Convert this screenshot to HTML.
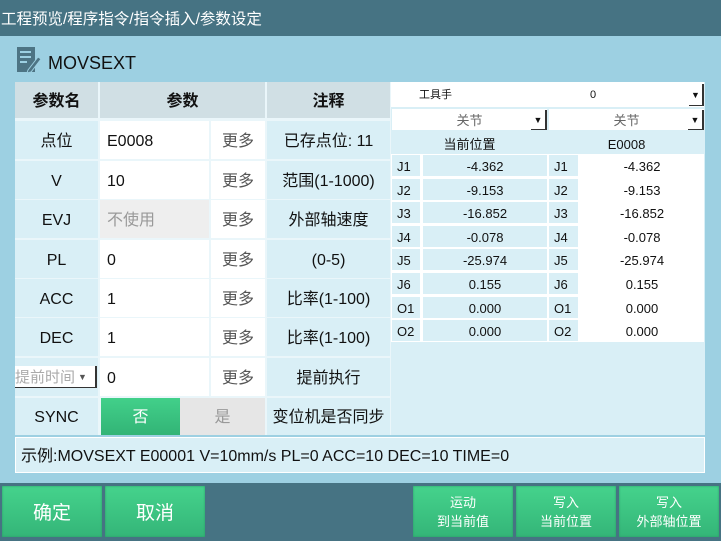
<!DOCTYPE html>
<html><head><meta charset="utf-8"><style>
*{margin:0;padding:0;box-sizing:border-box}
body{width:721px;height:541px;overflow:hidden;background:#9dd0e2;font-family:"Liberation Sans","Noto Sans CJK SC",sans-serif;position:relative;color:#111}
.a{position:absolute;display:flex;align-items:center;justify-content:center;font-size:16px;line-height:1;padding-top:3px}
.h{background:#d0dfe4;font-weight:bold}
.l{background:#d9eff6}
.w{background:#fff}
.g{color:#555}
.L{justify-content:flex-start;padding-left:7px}
.s{font-size:13px;padding-top:2px}
.btn{position:absolute;background:linear-gradient(#45d38c,#34b578);color:#fff;display:flex;align-items:center;justify-content:center;text-align:center;box-shadow:inset 0 0 2px #2a9a66}
</style></head><body>
<div class="a" style="left:0;top:0;width:721px;height:36px;background:#467383;color:#fff;justify-content:flex-start;font-size:15.5px;padding-left:1px">工程预览/程序指令/指令插入/参数设定</div>
<svg style="position:absolute;left:16px;top:46px" width="26" height="28" viewBox="0 0 26 28"><rect x="1" y="1" width="18" height="25" fill="#4d7484"/><rect x="4" y="5" width="11" height="2" fill="#9dd0e2"/><rect x="4" y="10" width="11" height="2" fill="#9dd0e2"/><rect x="4" y="15" width="7" height="2" fill="#9dd0e2"/><path d="M12 24 L22 11 L25 13 L15 26 L11 27 Z" fill="#4d7484" stroke="#9dd0e2" stroke-width="1"/></svg>
<div class="a" style="left:48px;top:47px;height:28px;font-size:18px">MOVSEXT</div>
<div style="position:absolute;left:15px;top:82px;width:376px;height:353px;background:#eaf6fa"></div>
<div class="a h" style="left:15px;top:82px;width:83px;height:36px">参数名</div>
<div class="a h" style="left:100px;top:82px;width:165px;height:36px">参数</div>
<div class="a h" style="left:267px;top:82px;width:123px;height:36px">注释</div>

<div class="a l" style="left:15px;top:121px;width:83px;height:38px">点位</div>
<div class="a w L" style="left:100px;top:121px;width:109px;height:38px">E0008</div>
<div class="a w g" style="left:211px;top:121px;width:54px;height:38px">更多</div>
<div class="a l" style="left:267px;top:121px;width:123px;height:38px">已存点位: 11</div>

<div class="a l" style="left:15px;top:161px;width:83px;height:38px">V</div>
<div class="a w L" style="left:100px;top:161px;width:109px;height:38px">10</div>
<div class="a w g" style="left:211px;top:161px;width:54px;height:38px">更多</div>
<div class="a l" style="left:267px;top:161px;width:123px;height:38px">范围(1-1000)</div>

<div class="a l" style="left:15px;top:200px;width:83px;height:38px">EVJ</div>
<div class="a L" style="left:100px;top:200px;width:109px;height:38px;background:#eee;color:#999">不使用</div>
<div class="a w g" style="left:211px;top:200px;width:54px;height:38px">更多</div>
<div class="a l" style="left:267px;top:200px;width:123px;height:38px">外部轴速度</div>

<div class="a l" style="left:15px;top:240px;width:83px;height:38px">PL</div>
<div class="a w L" style="left:100px;top:240px;width:109px;height:38px">0</div>
<div class="a w g" style="left:211px;top:240px;width:54px;height:38px">更多</div>
<div class="a l" style="left:267px;top:240px;width:123px;height:38px">(0-5)</div>

<div class="a l" style="left:15px;top:279px;width:83px;height:38px">ACC</div>
<div class="a w L" style="left:100px;top:279px;width:109px;height:38px">1</div>
<div class="a w g" style="left:211px;top:279px;width:54px;height:38px">更多</div>
<div class="a l" style="left:267px;top:279px;width:123px;height:38px">比率(1-100)</div>

<div class="a l" style="left:15px;top:318px;width:83px;height:38px">DEC</div>
<div class="a w L" style="left:100px;top:318px;width:109px;height:38px">1</div>
<div class="a w g" style="left:211px;top:318px;width:54px;height:38px">更多</div>
<div class="a l" style="left:267px;top:318px;width:123px;height:38px">比率(1-100)</div>

<div class="a l" style="left:15px;top:358px;width:83px;height:38px"></div>
<div class="a w" style="left:15px;top:366px;width:82px;height:22px;color:#aaa;justify-content:flex-start;font-size:15px;border-right:2px solid #333;border-bottom:1px solid #333;padding-top:1px">提前时间<span style="font-size:9px;color:#555;margin-left:3px">▼</span></div>
<div class="a w L" style="left:100px;top:358px;width:109px;height:38px">0</div>
<div class="a w g" style="left:211px;top:358px;width:54px;height:38px">更多</div>
<div class="a l" style="left:267px;top:358px;width:123px;height:38px">提前执行</div>

<div class="a l" style="left:15px;top:398px;width:83px;height:37px">SYNC</div>
<div class="a" style="left:101px;top:398px;width:79px;height:37px;background:linear-gradient(#42d08a,#32b476);color:#fff">否</div>
<div class="a" style="left:180px;top:398px;width:85px;height:37px;background:#e6e6e6;color:#999">是</div>
<div class="a l" style="left:267px;top:398px;width:123px;height:37px">变位机是否同步</div>

<div class="a l" style="left:15px;top:437px;width:690px;height:36px;justify-content:flex-start;padding-left:5px;border:1px solid #fff">示例:MOVSEXT E00001 V=10mm/s PL=0 ACC=10 DEC=10 TIME=0</div>

<div style="position:absolute;left:391px;top:82px;width:314px;height:353px;background:#d9eff6"></div>
<div class="a w s" style="left:391px;top:82px;width:313px;height:25px;justify-content:flex-start;font-size:11px"><span style="margin-left:28px">工具手</span><span style="margin-left:138px">0</span></div>
<div class="a s" style="left:689px;top:84px;width:15px;height:22px;background:#fff;border-right:2px solid #333;border-bottom:1px solid #333;font-size:9px">▼</div>
<div class="a w s" style="left:392px;top:109px;width:155px;height:21px;color:#666">关节</div>
<div class="a s" style="left:531px;top:110px;width:16px;height:20px;background:#fff;border-right:2px solid #333;border-bottom:1px solid #333;font-size:9px">▼</div>
<div class="a w s" style="left:549px;top:109px;width:155px;height:21px;color:#666">关节</div>
<div class="a s" style="left:688px;top:110px;width:16px;height:20px;background:#fff;border-right:2px solid #333;border-bottom:1px solid #333;font-size:9px">▼</div>
<div class="a l s" style="left:392px;top:132px;width:155px;height:22px">当前位置</div>
<div class="a l s" style="left:549px;top:132px;width:155px;height:22px">E0008</div>
<div style="position:absolute;left:391px;top:154px;width:313px;height:188px;background:#fff"></div>
<div id="rows"></div>
<script>
var d=[["J1","-4.362"],["J2","-9.153"],["J3","-16.852"],["J4","-0.078"],["J5","-25.974"],["J6","0.155"],["O1","0.000"],["O2","0.000"]];
var h="";d.forEach(function(r,i){var t=Math.round(155+i*23.6);
h+='<div class="a l s" style="left:392px;top:'+t+'px;width:28px;height:21px;justify-content:flex-start;padding-left:5px">'+r[0]+'</div>';
h+='<div class="a l s" style="left:423px;top:'+t+'px;width:124px;height:21px">'+r[1]+'</div>';
h+='<div class="a l s" style="left:549px;top:'+t+'px;width:29px;height:21px;justify-content:flex-start;padding-left:5px">'+r[0]+'</div>';
h+='<div class="a w s" style="left:580px;top:'+t+'px;width:124px;height:21px">'+r[1]+'</div>';});
document.getElementById("rows").innerHTML=h;
</script>
<div style="position:absolute;left:391px;top:342px;width:314px;height:93px;background:#d9eff6"></div>

<div style="position:absolute;left:0;top:483px;width:721px;height:58px;background:#467383"></div>
<div class="btn" style="left:2px;top:486px;width:100px;height:51px;font-size:19px">确定</div>
<div class="btn" style="left:105px;top:486px;width:100px;height:51px;font-size:19px">取消</div>
<div class="btn" style="left:413px;top:486px;width:100px;height:51px;font-size:13px;line-height:19px">运动<br>到当前值</div>
<div class="btn" style="left:516px;top:486px;width:100px;height:51px;font-size:13px;line-height:19px">写入<br>当前位置</div>
<div class="btn" style="left:619px;top:486px;width:100px;height:51px;font-size:13px;line-height:19px">写入<br>外部轴位置</div>
</body></html>
